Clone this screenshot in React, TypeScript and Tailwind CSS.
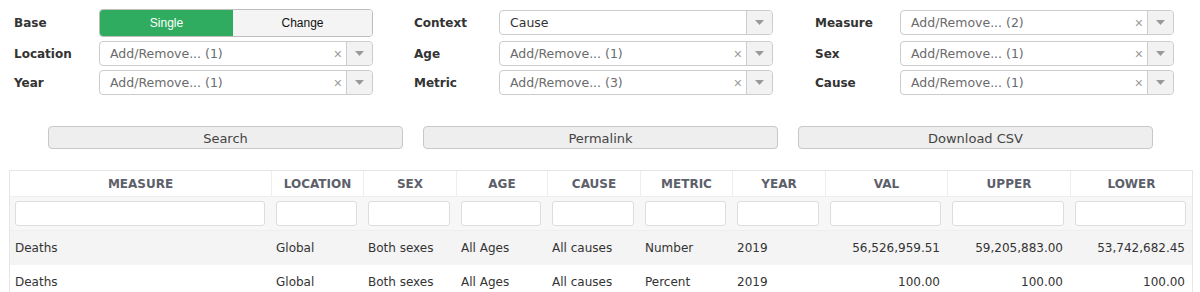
import React from "react";

const dv = { fontFamily: '"DejaVu Sans", Verdana, sans-serif' };
const lib = { fontFamily: '"Liberation Sans", Arial, sans-serif' };

function Arrow() {
  return (
    <div className="flex h-full w-[26px] items-center justify-center border-l border-[#cccccc] bg-[#f2f2f2] rounded-r-[4px]">
      <svg width="9" height="5" viewBox="0 0 9 5">
        <path d="M0 0 L9 0 L4.5 5 Z" fill="#9a9a9a" />
      </svg>
    </div>
  );
}

function Select({ text, clear = true, dark = false }: { text: string; clear?: boolean; dark?: boolean }) {
  return (
    <div className="flex h-[25px] w-[274px] shrink-0 items-center rounded-[4px] border border-[#cccccc] bg-white">
      <div
        className={`flex-1 pl-[10px] pt-[1px] text-[12.5px] leading-none ${dark ? "text-[#333333]" : "text-[#6b6b6b]"}`}
        style={dv}
      >
        {text}
      </div>
      {clear && (
        <div className="pr-[4px] text-[14px] leading-none text-[#9a9a9a]" style={lib}>
          ×
        </div>
      )}
      <Arrow />
    </div>
  );
}

function Label({ children }: { children: React.ReactNode }) {
  return (
    <div className="w-[85px] shrink-0 text-[12px] font-bold text-[#333333]" style={dv}>
      {children}
    </div>
  );
}

function Toggle() {
  return (
    <div className="flex h-[28px] w-[274px] shrink-0 overflow-hidden rounded-[4px] border border-[#bdbdbd]" style={lib}>
      <div className="flex w-[133px] items-center justify-center bg-[#2fac60] text-[12px] text-white">Single</div>
      <div className="flex flex-1 items-center justify-center bg-[#f4f4f4] text-[12px] text-[#111111]">Change</div>
    </div>
  );
}

const cols = ["MEASURE", "LOCATION", "SEX", "AGE", "CAUSE", "METRIC", "YEAR", "VAL", "UPPER", "LOWER"];
const rows = [
  ["Deaths", "Global", "Both sexes", "All Ages", "All causes", "Number", "2019", "56,526,959.51", "59,205,883.00", "53,742,682.45"],
  ["Deaths", "Global", "Both sexes", "All Ages", "All causes", "Percent", "2019", "100.00", "100.00", "100.00"],
];
const grid = "grid grid-cols-[261px_92px_93px_91px_93px_92px_93px_122px_123px_122px]";

export default function App() {
  return (
    <div className="h-[292px] w-[1200px] overflow-hidden bg-white" style={dv}>
      {/* form */}
      <div className="flex pl-[14px] pt-[8px]">
        {[
          [
            ["Base", <Toggle key="t" />],
            ["Location", <Select key="a" text="Add/Remove... (1)" />],
            ["Year", <Select key="b" text="Add/Remove... (1)" />],
          ],
          [
            ["Context", <Select key="c" text="Cause" clear={false} dark />],
            ["Age", <Select key="d" text="Add/Remove... (1)" />],
            ["Metric", <Select key="e" text="Add/Remove... (3)" />],
          ],
          [
            ["Measure", <Select key="f" text="Add/Remove... (2)" />],
            ["Sex", <Select key="g" text="Add/Remove... (1)" />],
            ["Cause", <Select key="h" text="Add/Remove... (1)" />],
          ],
        ].map((col, ci) => (
          <div key={ci} className={`flex shrink-0 flex-col gap-[4px] ${ci === 1 ? "w-[401px]" : "w-[400px]"}`}>
            {col.map(([l, c], ri) => (
              <div key={ri} className={`flex items-center ${ri === 0 ? "h-[29px]" : "h-[25px]"}`}>
                <Label>{l}</Label>
                {c}
              </div>
            ))}
          </div>
        ))}
      </div>

      {/* buttons */}
      <div className="mt-[31px] flex gap-[20px] pl-[48px]">
        {["Search", "Permalink", "Download CSV"].map((b) => (
          <div
            key={b}
            className="flex h-[23px] w-[355px] shrink-0 items-center justify-center rounded-[4px] border border-[#c8c8c8] bg-[#eeeeee] pt-[2px] text-[13px] text-[#444444]"
          >
            {b}
          </div>
        ))}
      </div>

      {/* table */}
      <div className="ml-[9px] mt-[21px] w-[1184px] border-x border-t border-[#e6e6e6]">
        <div className={`${grid} h-[25px] bg-white`}>
          {cols.map((c, i) => (
            <div
              key={c}
              className={`flex items-center justify-center text-[12px] font-bold text-[#5d5f6b] ${i > 0 ? "border-l border-[#eeeeee]" : ""}`}
            >
              {c}
            </div>
          ))}
        </div>
        <div className={`${grid} h-[35px] items-center border-y border-[#eeeeee] bg-[#f7f7f7]`}>
          {cols.map((c) => (
            <div key={c} className="pl-[5px] pr-[6px]">
              <div className="h-[25px] rounded-[3px] border border-[#dddddd] bg-white" />
            </div>
          ))}
        </div>
        {rows.map((r, ri) => (
          <div key={ri} className={`${grid} h-[34px] items-center ${ri === 0 ? "bg-[#f4f4f4]" : "bg-white"}`}>
            {r.map((v, i) => (
              <div
                key={i}
                className={`px-[5px] text-[12px] text-[#333333] ${i >= 7 ? "pr-[7px] text-right" : ""}`}
              >
                {v}
              </div>
            ))}
          </div>
        ))}
      </div>
    </div>
  );
}
